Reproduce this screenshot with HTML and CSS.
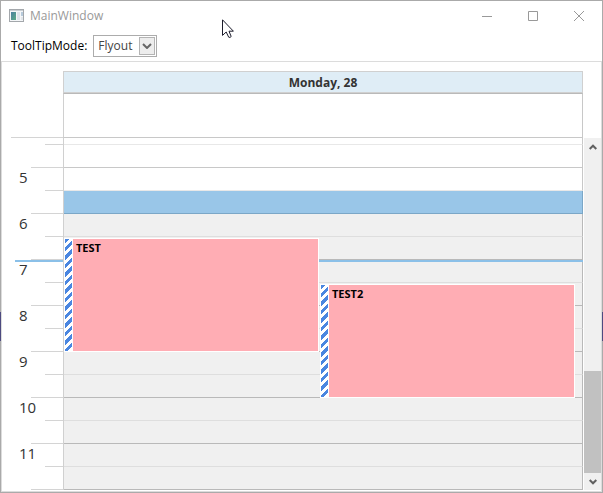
FILE: index.html
```html
<!DOCTYPE html>
<html lang="en">
<head>
<meta charset="utf-8">
<title>MainWindow</title>
<link rel="stylesheet" href="styles.css">
</head>
<body>
<div class="window">
  <header class="titlebar">
    <svg class="app-icon" width="15" height="13" viewBox="0 0 15 13" aria-hidden="true">
      <defs><linearGradient id="pane" x1="0" y1="0" x2="1" y2="1"><stop offset="0" stop-color="#4a7fa0"/><stop offset="1" stop-color="#5cab86"/></linearGradient></defs>
      <rect x=".5" y=".5" width="14" height="12" fill="#f4f6f8" stroke="#a3a7ab"/>
      <rect x="1" y="1" width="13" height="1" fill="#c9ced3"/>
      <rect x="2" y="3" width="5" height="8" fill="url(#pane)"/>
      <rect x="8" y="3" width="3" height="8" fill="#dde3ea"/>
      <rect x="12" y="3" width="2" height="4" fill="#b7cadb"/>
      <rect x="12" y="8" width="2" height="3" fill="#e2e6ea"/>
    </svg>
    <h1 class="title">MainWindow</h1>
    <div class="window-buttons">
      <button type="button" aria-label="Minimize"><svg width="10" height="10" viewBox="0 0 10 10"><path d="M0 5.5H10"/></svg></button>
      <button type="button" aria-label="Maximize"><svg width="10" height="10" viewBox="0 0 10 10"><path d="M.5 .5h9v9h-9z"/></svg></button>
      <button type="button" aria-label="Close"><svg width="10" height="10" viewBox="0 0 10 10"><path d="M0 0L10 10M10 0L0 10"/></svg></button>
    </div>
  </header>

  <div class="toolbar">
    <label for="mode">ToolTipMode:</label>
    <div class="combo">
      <select id="mode"><option>Flyout</option></select>
      <span class="combo-arrow"><svg width="10" height="6" viewBox="0 0 10 6"><path d="M1 1L5 5L9 1"/></svg></span>
    </div>
  </div>

  <main class="scheduler">
    <div class="day-header">Monday, 28</div>
    <div class="all-day-ruler"></div>
    <div class="all-day"></div>

    <div class="ruler rows">
      <div class="mark"><span></span><i></i></div>
      <div class="mark hour"><span></span><i></i></div>
      <div class="mark"><span>5</span><i></i></div>
      <div class="mark hour"><span></span><i></i></div>
      <div class="mark"><span>6</span><i></i></div>
      <div class="mark hour"><span></span><i></i></div>
      <div class="mark"><span>7</span><i></i></div>
      <div class="mark hour"><span></span><i></i></div>
      <div class="mark"><span>8</span><i></i></div>
      <div class="mark hour"><span></span><i></i></div>
      <div class="mark"><span>9</span><i></i></div>
      <div class="mark hour"><span></span><i></i></div>
      <div class="mark"><span>10</span><i></i></div>
      <div class="mark hour"><span></span><i></i></div>
      <div class="mark"><span>11</span><i></i></div>
      <div class="mark hour"><span></span><i></i></div>
    </div>
    <div class="ruler-overlay rows"><div class="now"></div></div>

    <div class="day rows">
      <div class="slot off"></div>
      <div class="slot off hour"></div>
      <div class="slot off"></div>
      <div class="slot selected"></div>
      <div class="slot"></div>
      <div class="slot hour"></div>
      <div class="slot"></div>
      <div class="slot hour"></div>
      <div class="slot"></div>
      <div class="slot hour"></div>
      <div class="slot"></div>
      <div class="slot hour"></div>
      <div class="slot"></div>
      <div class="slot hour"></div>
      <div class="slot"></div>
      <div class="slot hour"></div>
    </div>
    <div class="appointments rows">
      <div class="now"></div>
      <article class="appointment first"><span class="status"></span><h2>TEST</h2></article>
      <article class="appointment second"><span class="status"></span><h2>TEST2</h2></article>
    </div>

    <div class="scrollbar">
      <button type="button" aria-label="Scroll up"><svg width="8" height="6" viewBox="0 0 8 6"><path d="M.7 5L4 1.7L7.3 5"/></svg></button>
      <div class="track"><div class="thumb"></div></div>
      <button type="button" aria-label="Scroll down"><svg width="8" height="6" viewBox="0 0 8 6"><path d="M.7 1L4 4.3L7.3 1"/></svg></button>
    </div>
  </main>
</div>
<svg class="pointer" width="12" height="20" viewBox="0 0 12 20" aria-hidden="true"><path d="M.5 .8V16.4L4.2 13L6.7 18.2Q8 19 9.2 17.5L7 12.2H11.4Z"/></svg>
</body>
</html>
```
FILE: styles.css
```css
* { box-sizing: border-box; }

body {
  margin: 0;
  min-height: 100vh;
  display: flex;
  padding: 1px;
  background: linear-gradient(#aaa 312px, #4d4a80 312px, #4d4a80 341px, #aaa 341px);
  font: 12px/16px "Open Sans", "Noto Sans", sans-serif;
  color: #000;
}

button {
  margin: 0;
  padding: 0;
  border: 0;
  background: none;
  display: flex;
  align-items: center;
  justify-content: center;
}

h1, h2 { margin: 0; font-size: inherit; }

svg path { fill: none; }

.window {
  flex: 1;
  display: flex;
  flex-direction: column;
  background: #fff;
}

.titlebar {
  display: flex;
  align-items: center;
  height: 29px;
  padding-left: 8px;
}

.title {
  flex: 1;
  margin-left: 6px;
  font-weight: 400;
  color: #999;
}

.window-buttons { display: flex; }
.window-buttons button { width: 46px; height: 29px; }
.window-buttons path { stroke: #999; }

.toolbar {
  display: flex;
  align-items: center;
  gap: 6px;
  height: 31px;
  padding-left: 10px;
}

.combo { position: relative; }

.combo select {
  appearance: none;
  display: block;
  width: 64px;
  height: 22px;
  padding: 0 20px 0 4px;
  border: 1px solid #acacac;
  border-radius: 0;
  background: #fff;
  font: inherit;
  color: #444;
}

.combo-arrow {
  position: absolute;
  top: 2px;
  right: 2px;
  bottom: 2px;
  width: 16px;
  display: flex;
  align-items: center;
  justify-content: center;
  border: 1px solid #b4b4b4;
  background: #ededed;
  pointer-events: none;
}

.combo-arrow path { stroke: #666; stroke-width: 2; }

.scheduler {
  flex: 1;
  display: grid;
  grid-template-columns: 61px 1fr 18px;
  grid-template-rows: 22px 45px auto;
  align-content: start;
  padding-top: 9px;
  border: 1px solid #dcdcdc;
}

.day-header {
  grid-column: 2;
  border: 1px solid #d0d0d0;
  background: #dfedf6;
  font-weight: 700;
  line-height: 22px;
  text-align: center;
  color: #333;
}

.all-day-ruler {
  grid-column: 1;
  margin-left: 9px;
  border-bottom: 1px solid #d4d4d4;
}

.all-day {
  grid-column: 2;
  border: 1px solid #c8c8c8;
  border-top-color: #b9b9b9;
  border-left-color: #d0d0d0;
}

.rows {
  grid-row: 3;
  display: grid;
  grid-template-rows: 7px repeat(15, 23px);
}

.ruler, .ruler-overlay { grid-column: 1; }

.mark {
  display: flex;
  padding-left: 17px;
  font-size: 15px;
  line-height: 18px;
  color: #333;
}

.mark span { flex: 0 0 26px; }
.mark.hour span { flex-basis: 12px; }
.mark i { flex: 1; border-bottom: 1px solid #d4d4d4; }

.day, .appointments { grid-column: 2; }

.day { border-left: 1px solid #d0d0d0; }

.appointments {
  grid-template-columns: 1fr 1fr 7px;
  padding-left: 1px;
}

.slot {
  border-right: 1px solid #b9b9b9;
  border-bottom: 1px solid #dedede;
  background: #f0f0f0;
}

.slot.hour { border-bottom-color: #b9b9b9; }
.slot.off { background: #fff; border-color: #c8c8c8; border-bottom-color: #e8e8e8; }
.slot.off.hour { border-bottom-color: #c8c8c8; }
.slot.selected { background: #99c6e8; border-color: #7ba7c7; }

.now {
  grid-row: 7;
  grid-column: 1 / -1;
  align-self: start;
  height: 2px;
  background: #8bc0e8;
}

.ruler-overlay .now { margin-left: 13px; }

.appointment {
  display: flex;
  margin: 1px 1px 0 0;
  border: 1px solid #fff;
  background: #ffadb4;
}

.appointment.first { grid-row: 6 / span 5; grid-column: 1; }
.appointment.second { grid-row: 8 / span 5; grid-column: 2; }

.appointment h2 {
  padding: 1px 3px;
  font-size: 11px;
  font-weight: 700;
}

.status {
  width: 8px;
  border-right: 1px solid #fff;
  background: repeating-linear-gradient(135deg, #4a86e0 0 3px, #fff 3px 6px);
}

.scrollbar {
  grid-row: 3;
  grid-column: 3;
  display: flex;
  flex-direction: column;
  margin-left: 1px;
  background: #f0f0f0;
}

.scrollbar button { height: 17px; }
.scrollbar path { stroke: #606060; stroke-width: 2; }

.track {
  flex: 1;
  display: flex;
  flex-direction: column;
  justify-content: flex-end;
}

.thumb { height: 32%; background: #c1c1c1; }

.pointer {
  position: absolute;
  left: 222px;
  top: 19px;
}

.pointer path { fill: #fff; stroke: #1c1c2c; }
```
